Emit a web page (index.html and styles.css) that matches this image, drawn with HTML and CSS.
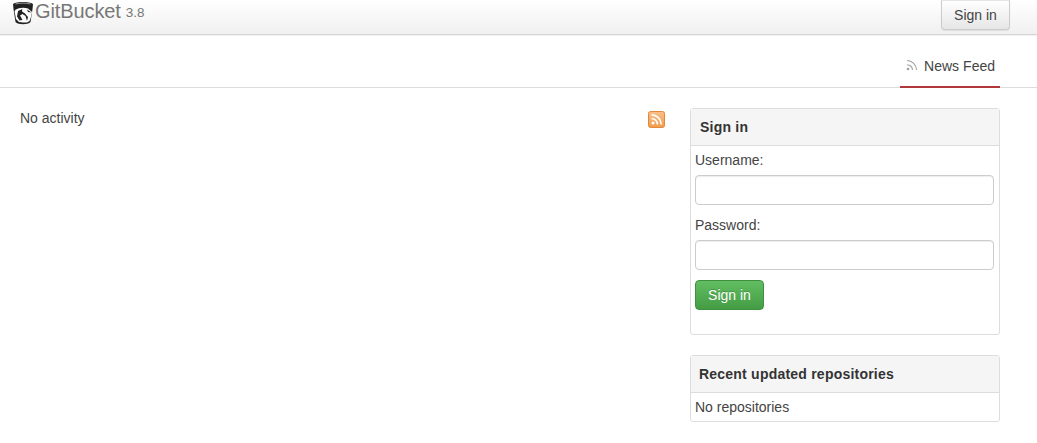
FILE: index.html
```html
<!DOCTYPE html>
<html lang="en">
<head>
<meta charset="utf-8">
<title>GitBucket</title>
<link rel="stylesheet" href="styles.css">
</head>
<body>
<header class="navbar">
  <a class="brand" href="#">
    <svg class="logo" width="22" height="24" viewBox="0 0 22 24">
      <path d="M1 3 C5 .4 17 .4 21 3 L20.500 8 L18.500 21 C16 24 6 24 3.500 21 L1.500 8 Z" fill="#222"/>
      <path d="M3.500 3 C8 1.800 14 1.800 18.500 3" fill="none" stroke="#aaa" stroke-width=".9"/>
      <path d="M2.500 10 C5 6.500 12 6 16 7.500 L20 11 L19 16 L17.500 20 L15 21.500 H11 L7 21 L4 18 Z" fill="#fff"/>
      <path d="M6 10 L10.500 8 C9.500 10 10 11 12.500 12 L16 16 L15 20 L13.500 15 L10.500 13 L8 14.500 L10.500 19 L7.500 19.500 L5 15.500 Z" fill="#222"/>
      <path d="M15 8.500 L19.500 11.500 L16 11 Z" fill="#222"/>
    </svg>
    <span class="brand-name">GitBucket</span>
    <span class="version">3.8</span>
  </a>
  <a class="nav-btn" href="#">Sign in</a>
</header>

<nav class="tabs">
  <a class="tab" href="#">
    <svg class="tab-icon" width="12" height="12" viewBox="0 0 12 12" fill="none" stroke="#a0a0a0" stroke-width="1.100">
      <circle cx="2" cy="10" r="1.300" fill="#a0a0a0" stroke="none"/>
      <path d="M1 6 A5 5 0 0 1 6.500 11"/>
      <path d="M1 1.500 A9.500 9.500 0 0 1 10.500 11"/>
    </svg>
    <span class="tab-label">News Feed</span>
  </a>
</nav>

<main class="content">
  <section class="activity">
    <p class="no-activity">No activity</p>
    <svg class="feed" width="17" height="17" viewBox="0 0 17 17">
      <defs>
        <linearGradient id="feedgrad" x1="0" y1="0" x2="0" y2="1">
          <stop offset="0" stop-color="#fbc08a"/>
          <stop offset="1" stop-color="#f29a4a"/>
        </linearGradient>
      </defs>
      <rect x=".5" y=".5" width="16" height="16" rx="2" fill="url(#feedgrad)" stroke="#e0893c"/>
      <circle cx="5" cy="12" r="1.600" fill="#fff"/>
      <path d="M3.500 7.500 A6 6 0 0 1 9.500 13.500" fill="none" stroke="#fff" stroke-width="1.700"/>
      <path d="M3.500 3.800 A9.700 9.700 0 0 1 13.200 13.500" fill="none" stroke="#fff" stroke-width="1.700"/>
    </svg>
  </section>

  <aside class="sidebar">
    <section class="box signin-box">
      <h2 class="box-header">Sign in</h2>
      <form class="signin-form">
        <label class="field-label" for="username">Username:</label>
        <input class="field" id="username" type="text">
        <label class="field-label" for="password">Password:</label>
        <input class="field" id="password" type="password">
        <button class="submit" type="button">Sign in</button>
      </form>
    </section>
    <section class="box repos-box">
      <h2 class="box-header repos-header">Recent updated repositories</h2>
      <div class="box-body">No repositories</div>
    </section>
  </aside>
</main>
</body>
</html>
```

FILE: styles.css
```css
* {
  box-sizing: border-box;
}

html, body {
  margin: 0;
  background: #fff;
}

body {
  font-family: "Liberation Sans", Arial, sans-serif;
  font-size: 14px;
  line-height: 20px;
  color: #444;
  overflow: hidden;
}

a {
  text-decoration: none;
}

.navbar {
  height: 35px;
  display: flex;
  justify-content: space-between;
  align-items: flex-start;
  padding: 0 27px 0 12px;
  background: linear-gradient(to bottom, #fff, #f0f0f0);
  border-bottom: 1px solid #d5d5d5;
  box-shadow: 0 1px 1px rgba(0, 0, 0, .05);
}

.brand {
  display: flex;
  align-items: flex-start;
  color: #777;
}

.logo {
  display: block;
  flex: none;
  margin-top: 1px;
}

.brand-name {
  margin-left: 1px;
  font-size: 20px;
  line-height: 22px;
  letter-spacing: -.1px;
}

.version {
  margin-left: 5px;
  margin-top: 2px;
  font-size: 13.500px;
  line-height: 22px;
}

.nav-btn {
  width: 69px;
  height: 30px;
  display: flex;
  align-items: center;
  justify-content: center;
  color: #444;
  background: linear-gradient(to bottom, #fff, #e6e6e6);
  border: 1px solid #ccc;
  border-top-color: #e5e5e5;
  border-radius: 0 0 4px 4px;
  box-shadow: 0 1px 1px rgba(0, 0, 0, .08);
}

.tabs {
  height: 53px;
  display: flex;
  justify-content: flex-end;
  padding-right: 37px;
  border-bottom: 1px solid #ddd;
}

.tab {
  width: 100px;
  height: 53px;
  display: flex;
  align-items: flex-end;
  padding: 0 0 10px 6px;
  color: #444;
  border-bottom: 2px solid #b0383a;
}

.tab-icon {
  margin: 0 6px 5px 0;
  flex: none;
}

.tab-label {
  letter-spacing: .03px;
}

.content {
  display: flex;
  padding: 20px 37px 0 20px;
  gap: 25px;
}

.activity {
  width: 645px;
  display: flex;
  justify-content: space-between;
  align-items: flex-start;
}

.no-activity {
  margin: 0;
}

.feed {
  display: block;
  margin-top: 3px;
}

.sidebar {
  width: 310px;
  display: flex;
  flex-direction: column;
  gap: 20px;
}

.box {
  border: 1px solid #ddd;
  border-radius: 3px;
}

.box-header {
  margin: 0;
  height: 37px;
  padding: 8px 9px;
  font-size: 14px;
  line-height: 20px;
  font-weight: bold;
  letter-spacing: .22px;
  color: #333;
  background: #f5f5f5;
  border-bottom: 1px solid #ddd;
}

.repos-header {
  padding-left: 8px;
}

.signin-box {
  height: 227px;
}

.signin-form {
  display: flex;
  flex-direction: column;
  align-items: flex-start;
  padding: 4px;
}

.field-label {
  margin-bottom: 5px;
}

.field {
  width: 299px;
  height: 30px;
  margin-bottom: 10px;
  padding: 4px 10px;
  background: #fff;
  border: 1px solid #ccc;
  border-radius: 4px;
  box-shadow: inset 0 1px 1px rgba(0, 0, 0, .075);
}

.submit {
  width: 69px;
  height: 30px;
  margin-top: 0;
  padding: 0;
  font: inherit;
  color: #fff;
  text-shadow: 0 -1px 0 rgba(0, 0, 0, .2);
  background: linear-gradient(to bottom, #62bd62, #449d44);
  border: 1px solid #3e8f3e;
  border-radius: 4px;
}

.repos-box {
  height: 67px;
}

.box-body {
  padding: 4px;
}
```
